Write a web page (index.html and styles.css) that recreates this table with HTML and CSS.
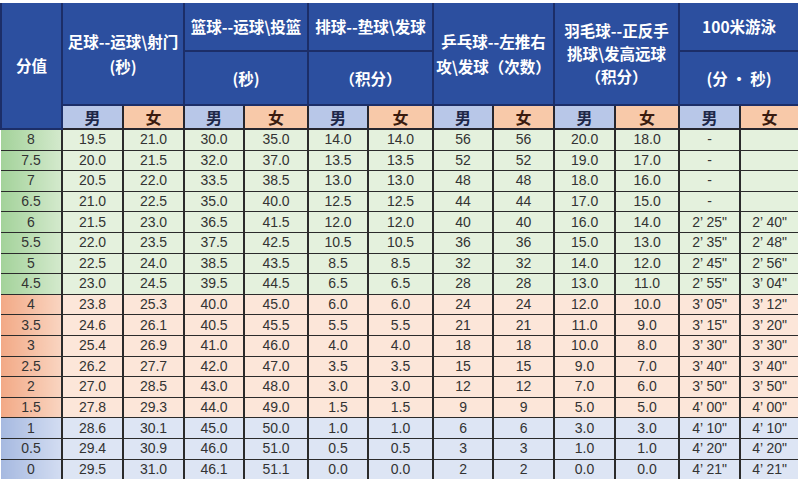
FILE: index.html
```html
<!DOCTYPE html>
<html lang="zh-CN">
<head>
<meta charset="utf-8">
<title>体育评分标准</title>
<link rel="stylesheet" href="styles.css">
</head>
<body>
<table class="score">
<colgroup>
<col class="w61"><col class="w61"><col class="w61"><col class="w60"><col class="w64"><col class="w60"><col class="w65"><col class="w60"><col class="w61"><col class="w61"><col class="w64"><col class="w61"><col class="w58">
</colgroup>
<thead>
<tr class="h1">
<th rowspan="3" class="lead">分值</th>
<th colspan="2" rowspan="2">足球--运球\射门<br>(秒)</th>
<th colspan="2" class="top">篮球--运球\投篮</th>
<th colspan="2" class="top">排球--垫球\发球</th>
<th colspan="2" rowspan="2">乒乓球--左推右<br>攻\发球（次数）</th>
<th colspan="2" rowspan="2" class="three">羽毛球--正反手<br>挑球\发高远球<br>（积分）</th>
<th colspan="2" class="top">100米游泳</th>
</tr>
<tr class="h2">
<th colspan="2">(秒)</th>
<th colspan="2">（积分）</th>
<th colspan="2">(分 · 秒)</th>
</tr>
<tr class="h3">
<th class="m">男</th><th class="f">女</th>
<th class="m">男</th><th class="f">女</th>
<th class="m">男</th><th class="f">女</th>
<th class="m">男</th><th class="f">女</th>
<th class="m">男</th><th class="f">女</th>
<th class="m">男</th><th class="f">女</th>
</tr>
</thead>
<tbody>
<tr class="g"><td>8</td><td>19.5</td><td>21.0</td><td>30.0</td><td>35.0</td><td>14.0</td><td>14.0</td><td>56</td><td>56</td><td>20.0</td><td>18.0</td><td>-</td><td></td></tr>
<tr class="g"><td>7.5</td><td>20.0</td><td>21.5</td><td>32.0</td><td>37.0</td><td>13.5</td><td>13.5</td><td>52</td><td>52</td><td>19.0</td><td>17.0</td><td>-</td><td></td></tr>
<tr class="g"><td>7</td><td>20.5</td><td>22.0</td><td>33.5</td><td>38.5</td><td>13.0</td><td>13.0</td><td>48</td><td>48</td><td>18.0</td><td>16.0</td><td>-</td><td></td></tr>
<tr class="g"><td>6.5</td><td>21.0</td><td>22.5</td><td>35.0</td><td>40.0</td><td>12.5</td><td>12.5</td><td>44</td><td>44</td><td>17.0</td><td>15.0</td><td>-</td><td></td></tr>
<tr class="g"><td>6</td><td>21.5</td><td>23.0</td><td>36.5</td><td>41.5</td><td>12.0</td><td>12.0</td><td>40</td><td>40</td><td>16.0</td><td>14.0</td><td>2’ 25"</td><td>2’ 40"</td></tr>
<tr class="g"><td>5.5</td><td>22.0</td><td>23.5</td><td>37.5</td><td>42.5</td><td>10.5</td><td>10.5</td><td>36</td><td>36</td><td>15.0</td><td>13.0</td><td>2’ 35"</td><td>2’ 48"</td></tr>
<tr class="g"><td>5</td><td>22.5</td><td>24.0</td><td>38.5</td><td>43.5</td><td>8.5</td><td>8.5</td><td>32</td><td>32</td><td>14.0</td><td>12.0</td><td>2’ 45"</td><td>2’ 56"</td></tr>
<tr class="g"><td>4.5</td><td>23.0</td><td>24.5</td><td>39.5</td><td>44.5</td><td>6.5</td><td>6.5</td><td>28</td><td>28</td><td>13.0</td><td>11.0</td><td>2’ 55"</td><td>3’ 04"</td></tr>
<tr class="o"><td>4</td><td>23.8</td><td>25.3</td><td>40.0</td><td>45.0</td><td>6.0</td><td>6.0</td><td>24</td><td>24</td><td>12.0</td><td>10.0</td><td>3’ 05"</td><td>3’ 12"</td></tr>
<tr class="o"><td>3.5</td><td>24.6</td><td>26.1</td><td>40.5</td><td>45.5</td><td>5.5</td><td>5.5</td><td>21</td><td>21</td><td>11.0</td><td>9.0</td><td>3’ 15"</td><td>3’ 20"</td></tr>
<tr class="o"><td>3</td><td>25.4</td><td>26.9</td><td>41.0</td><td>46.0</td><td>4.0</td><td>4.0</td><td>18</td><td>18</td><td>10.0</td><td>8.0</td><td>3’ 30"</td><td>3’ 30"</td></tr>
<tr class="o"><td>2.5</td><td>26.2</td><td>27.7</td><td>42.0</td><td>47.0</td><td>3.5</td><td>3.5</td><td>15</td><td>15</td><td>9.0</td><td>7.0</td><td>3’ 40"</td><td>3’ 40"</td></tr>
<tr class="o"><td>2</td><td>27.0</td><td>28.5</td><td>43.0</td><td>48.0</td><td>3.0</td><td>3.0</td><td>12</td><td>12</td><td>7.0</td><td>6.0</td><td>3’ 50"</td><td>3’ 50"</td></tr>
<tr class="o"><td>1.5</td><td>27.8</td><td>29.3</td><td>44.0</td><td>49.0</td><td>1.5</td><td>1.5</td><td>9</td><td>9</td><td>5.0</td><td>5.0</td><td>4’ 00"</td><td>4’ 00"</td></tr>
<tr class="b"><td>1</td><td>28.6</td><td>30.1</td><td>45.0</td><td>50.0</td><td>1.0</td><td>1.0</td><td>6</td><td>6</td><td>3.0</td><td>3.0</td><td>4’ 10"</td><td>4’ 10"</td></tr>
<tr class="b"><td>0.5</td><td>29.4</td><td>30.9</td><td>46.0</td><td>51.0</td><td>0.5</td><td>0.5</td><td>3</td><td>3</td><td>1.0</td><td>1.0</td><td>4’ 20"</td><td>4’ 20"</td></tr>
<tr class="b"><td>0</td><td>29.5</td><td>31.0</td><td>46.1</td><td>51.1</td><td>0.0</td><td>0.0</td><td>2</td><td>2</td><td>0.0</td><td>0.0</td><td>4’ 21"</td><td>4’ 21"</td></tr>
</tbody>
</table>
</body>
</html>
```
FILE: styles.css
```css
html, body {
  margin: 0;
  padding: 0;
  background: #ffffff;
}
body {
  padding-top: 3px;
  font-family: "Liberation Sans", "Noto Sans CJK SC", sans-serif;
}
.score {
  border-collapse: collapse;
  table-layout: fixed;
  width: 797px;
}
.w58 { width: 58px; }
.w60 { width: 60px; }
.w61 { width: 61px; }
.w64 { width: 64px; }
.w65 { width: 65px; }

.score th {
  padding: 0;
  font-family: "Noto Sans CJK SC", sans-serif;
  font-weight: 700;
}
.score thead tr.h1 th,
.score thead tr.h2 th {
  background: #2c4f9f;
  color: #ffffff;
  font-size: 15.5px;
  line-height: 25px;
  border: 2px solid #1c2e68;
  border-top: none;
}
.score thead tr.h1 th.three { line-height: 23px; }
.score thead th:first-child { border-left: none; }
.score thead tr.h1 th:last-child,
.score thead tr.h2 th:last-child { border-right: none; }
.score tr.h1 { height: 48px; }
.score tr.h2 { height: 54px; }
.score tr.h3 { height: 24px; }
.score thead tr.h3 th {
  font-size: 16px;
  line-height: 20px;
  border: 2px solid #26262e;
  border-top-color: #1c2e68;
}
.score thead tr.h3 th:last-child { border-right: none; }
.score th.m { background: #b8c7e8; color: #1e2748; }
.score th.f { background: #f8c9a9; color: #3a1c10; }

.score td {
  height: 19.6px;
  padding: 0;
  text-align: center;
  font-size: 14px;
  line-height: 17px;
  color: #333333;
  border: 2px solid #2b2b2b;
  border-top-width: 1.5px;
  border-bottom-width: 1.5px;
}
.score td:first-child { border-left: none; }
.score td:last-child { border-right: none; }
.score tbody tr:last-child td { border-bottom: none; }

.score tr.g td { background: #e4f1dd; }
.score tr.g td:first-child { background: linear-gradient(to right, #a3d29a, #d3e9cc); }
.score tr.o td { background: #fce6d9; }
.score tr.o td:first-child { background: linear-gradient(to right, #f2a986, #f9d4c0); }
.score tr.b td { background: #dde5f4; }
.score tr.b td:first-child { background: linear-gradient(to right, #a6b9e0, #d2dcf1); }
```
